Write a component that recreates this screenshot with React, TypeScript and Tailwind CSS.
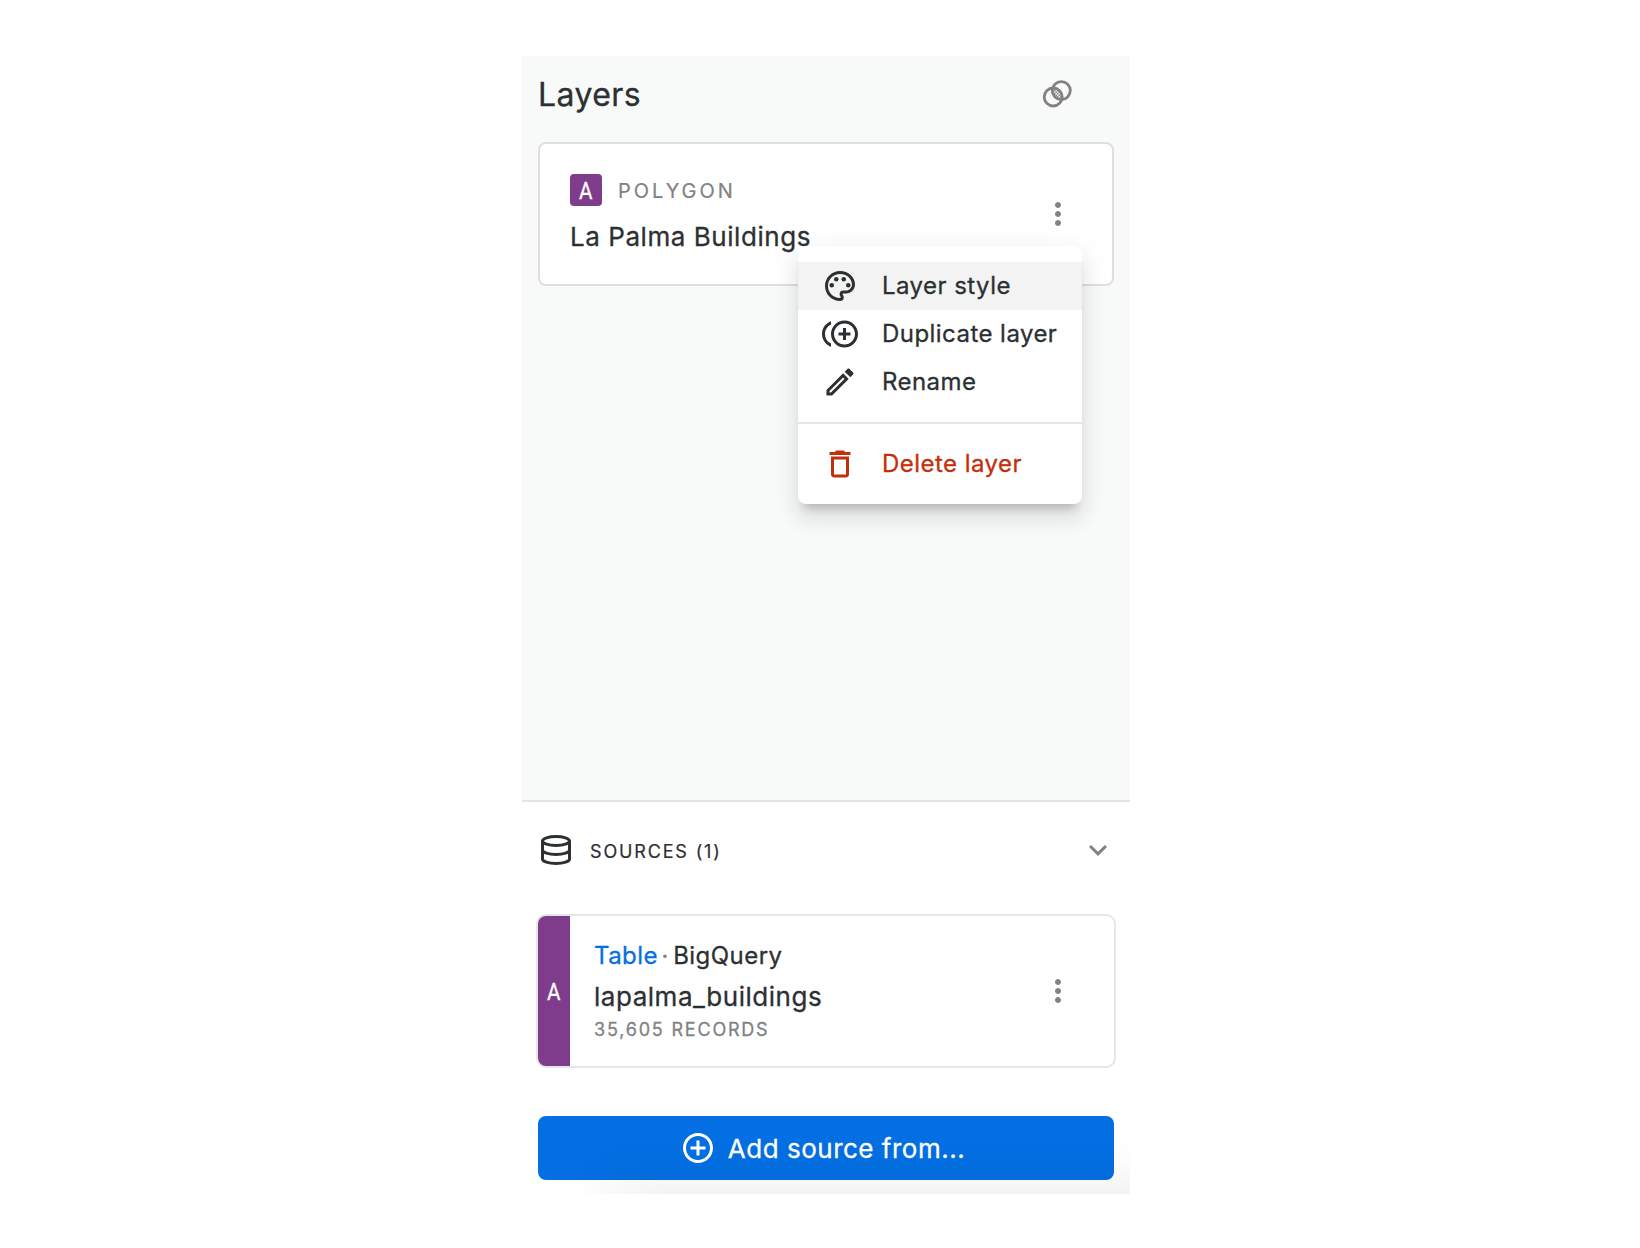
import React from "react";
import {
  MdAddCircleOutline,
  MdExpandMore,
  MdMoreVert,
  MdDeleteOutline,
  MdOutlineControlPointDuplicate,
  MdOutlineEdit,
  MdOutlinePalette,
} from "react-icons/md";

function OverlapIcon() {
  return (
    <svg width="36" height="36" viewBox="0 0 36 36" fill="none">
      <defs>
        <clipPath id="lens">
          <circle cx="22.3" cy="15.6" r="9" />
        </clipPath>
        <pattern id="checks" width="3" height="3" patternUnits="userSpaceOnUse">
          <rect width="1.5" height="1.5" fill="#828282" />
          <rect x="1.5" y="1.5" width="1.5" height="1.5" fill="#828282" />
        </pattern>
      </defs>
      <circle cx="14.2" cy="22" r="9" fill="url(#checks)" clipPath="url(#lens)" />
      <circle cx="14.2" cy="22" r="9" stroke="#828282" strokeWidth="2.8" />
      <circle cx="22.3" cy="15.6" r="9" stroke="#828282" strokeWidth="2.8" />
    </svg>
  );
}

function DatabaseIcon() {
  return (
    <svg width="36" height="36" viewBox="0 0 36 36" fill="none" stroke="#2c3032" strokeWidth="3">
      <ellipse cx="18" cy="9" rx="13.5" ry="4.5" />
      <path d="M4.5 9v18c0 2.5 6 4.5 13.5 4.5s13.5-2 13.5-4.500V9" />
      <path d="M4.5 18c0 2.500 6 4.500 13.500 4.500s13.500-2 13.500-4.500" />
    </svg>
  );
}

function Letter() {
  return (
    <span className="inline-block origin-center scale-x-[0.86] pt-px font-['Roboto',sans-serif] text-2xl leading-8 text-white">
      A
    </span>
  );
}

const menuItems = [
  { label: "Layer style", Icon: MdOutlinePalette, active: true },
  { label: "Duplicate layer", Icon: MdOutlineControlPointDuplicate, active: false },
  { label: "Rename", Icon: MdOutlineEdit, active: false },
];

function LayerMenu() {
  return (
    <div className="absolute top-[102px] left-[258px] z-10 w-[284px] rounded-lg bg-white py-4 text-2xl tracking-[0.45px] shadow-[0_10px_10px_-6px_rgba(0,0,0,0.2),0_16px_20px_2px_rgba(0,0,0,0.06),0_6px_28px_4px_rgba(0,0,0,0.06)]">
      {menuItems.map(({ label, Icon, active }) => (
        <div
          key={label}
          className={
            active
              ? "flex h-12 items-center gap-6 bg-[#f3f3f3] pl-6"
              : "flex h-12 items-center gap-6 pl-6"
          }
        >
          <Icon className="size-9 shrink-0" />
          <span className="whitespace-nowrap">{label}</span>
        </div>
      ))}
      <div className="my-4 h-0.5 bg-[#e6e6e6]" />
      <div className="flex h-12 items-center gap-6 pl-6 text-[#c1300b]">
        <MdDeleteOutline className="size-9 shrink-0" />
        <span className="whitespace-nowrap">Delete layer</span>
      </div>
    </div>
  );
}

export default function App() {
  return (
    <div className="flex h-[1248px] w-[1640px] bg-white pt-14 pl-[522px] font-['Inter',sans-serif] text-[#2c3032] [-webkit-text-stroke:0.3px]">
      <main className="relative flex h-[1138px] w-[608px] flex-col overflow-hidden">
        <section className="h-[746px] border-b-2 border-[#e3e5e4] bg-[#f8faf9] px-4">
          <header className="flex h-[86px] items-center justify-between pr-[39px]">
            <h1 className="-mt-2 text-[32px] leading-10 tracking-[0.4px]">Layers</h1>
            <div className="-mt-3">
              <OverlapIcon />
            </div>
          </header>
          <div className="relative flex h-36 items-center justify-between rounded-lg border-2 border-[#dfdfdf] bg-white pr-9 pl-[30px]">
            <div className="flex flex-col">
              <div className="flex items-center gap-4">
                <span className="flex size-8 items-center justify-center rounded bg-[#7f3c8d]">
                  <Letter />
                </span>
                <span className="pt-0.5 text-xl tracking-[3px] text-[#828282] [-webkit-text-stroke:0.2px]">
                  POLYGON
                </span>
              </div>
              <div className="mt-[13px] -mb-px text-[26px] leading-9 tracking-[0.55px]">
                La Palma Buildings
              </div>
            </div>
            <MdMoreVert className="size-9 text-[#828282]" />
            <LayerMenu />
          </div>
        </section>

        <section className="flex flex-col px-4">
          <header className="flex h-24 items-center">
            <DatabaseIcon />
            <span className="mt-1 ml-4 grow text-lg tracking-[1.85px] [-webkit-text-stroke:0.2px]">
              SOURCES (1)
            </span>
            <MdExpandMore className="-mr-0.5 size-9 text-[#828282]" />
          </header>
          <div className="-mx-0.5 mt-4 flex h-[154px] items-stretch overflow-hidden rounded-[10px] border-2 border-[#e6e6e6] bg-white">
            <div className="flex w-8 items-center justify-center bg-[#7f3c8d]">
              <Letter />
            </div>
            <div className="flex grow flex-col pt-6 pl-6">
              <div className="flex items-center text-2xl leading-8 tracking-[0.45px]">
                <span className="text-[#036fe2]">Table</span>
                <span className="mr-[5px] ml-1 text-xl leading-8 text-[#828282] [-webkit-text-stroke:0.8px]">
                  ·
                </span>
                <span>BigQuery</span>
              </div>
              <div className="mt-[7px] mb-px text-[26px] leading-9 tracking-[0.53px]">lapalma_buildings</div>
              <div className="text-lg leading-7 tracking-[1.8px] text-[#828282]">35,605 RECORDS</div>
            </div>
            <MdMoreVert className="mr-[38px] size-9 self-center text-[#828282]" />
          </div>
          <button className="mt-12 flex h-16 items-center justify-center gap-3 rounded-lg bg-[#036fe2] pr-[7px] text-[26px] tracking-[0.5px] text-white">
            <MdAddCircleOutline className="size-9" />
            <span>Add source from...</span>
          </button>
        </section>

        <div className="pointer-events-none absolute top-full left-22 h-10 w-[700px] shadow-[0_0_60px_rgba(0,0,0,0.11)]" />
      </main>
    </div>
  );
}
